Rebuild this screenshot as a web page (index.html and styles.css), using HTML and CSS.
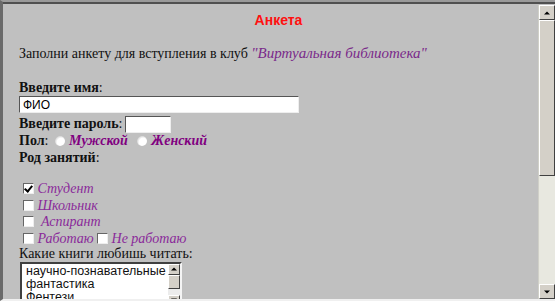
FILE: index.html
```html
<!DOCTYPE html>
<html lang="ru">
<head>
    <meta charset="UTF-8">
    <title>Анкета</title>
    <link rel="stylesheet" href="styles.css">
</head>
<body>
    <div class="window">
        <div class="page">
            <h3 class="title">Анкета</h3>
            <p class="intro">Заполни анкету для вступления в клуб <span class="club">"Виртуальная библиотека"</span></p>

            <div class="row"><b>Введите имя</b>:</div>
            <input class="name" type="text" value="ФИО">
            <div class="row"><b>Введите пароль</b>: <input class="pass" type="password"></div>
            <div class="row"><b>Пол</b>: <span class="radio"></span><i class="opt">Мужской</i> <span class="radio"></span><i class="opt">Женский</i></div>
            <div class="row"><b>Род занятий</b>:</div>

            <div class="checks">
                <div class="row"><span class="check on"></span> <i class="job">Студент</i></div>
                <div class="row"><span class="check"></span> <i class="job">Школьник</i></div>
                <div class="row"><span class="check"></span> &nbsp;<i class="job">Аспирант</i></div>
                <div class="row"><span class="check"></span> <i class="job">Работаю</i> <span class="check"></span> <i class="job">Не работаю</i></div>
            </div>
            <div class="row books">Какие книги любишь читать:</div>
            <div class="listbox">
                <div class="items">
                    <div>научно-познавательные</div>
                    <div>фантастика</div>
                    <div>Фентези</div>
                </div>
                <div class="minibar">
                    <span class="btn up"></span>
                    <span class="mthumb"></span>
                    <span class="mtrack"></span>
                    <span class="btn down"></span>
                </div>
            </div>
        </div>
        <div class="scrollbar">
            <span class="sbtn up"></span>
            <span class="thumb"></span>
            <span class="track"></span>
            <span class="sbtn down"></span>
        </div>
    </div>
</body>
</html>
```
FILE: styles.css
```css
body {
    margin: 0;
    overflow: hidden;
    background: #e4e4e0;
}
.window {
    display: flex;
    height: 297px;
    width: 552px;
    border-top: 2px solid #9a9a9a;
    border-left: 3px solid #6a6a6a;
    border-bottom: 2px solid #f0f0f0;
    background: #c0c0c0;
    box-shadow: inset 0 2px 0 #505050;
}
.page {
    flex: 1;
    padding: 0 0 0 16px;
    font-family: 'Liberation Serif', serif;
    font-size: 14px;
    color: #111;
    overflow: hidden;
}
.title {
    margin: 10px 0 0;
    text-align: center;
    font-family: 'Liberation Sans', Arial, sans-serif;
    font-size: 14px;
    color: #ff1010;
}
.intro {
    margin: 16px 0 0;
    line-height: 18px;
}
.club {
    font-style: italic;
    font-size: 15px;
    color: #7a2a8a;
}
.row {
    line-height: 17px;
    height: 17px;
}
.intro + .row {
    margin-top: 16px;
}
.name {
    display: block;
    box-sizing: border-box;
    width: 280px;
    height: 17px;
    margin: 0 0 2px;
    padding: 0 3px;
    font-family: 'Liberation Sans', Arial, sans-serif;
    font-size: 12px;
    border: 1px solid;
    border-color: #555 #eee #eee #555;
    background: #fff;
}
.pass {
    box-sizing: border-box;
    width: 46px;
    height: 17px;
    vertical-align: middle;
    border: 1px solid;
    border-color: #555 #eee #eee #555;
    background: #fff;
    margin: 0 0 0 -1px;
}
.radio {
    display: inline-block;
    width: 10px;
    height: 10px;
    margin: 0 4px 0 3px;
    border-radius: 50%;
    background: radial-gradient(circle at 60% 60%, #fff 45%, #d8d8d8 70%, #8a8a8a 100%);
    vertical-align: -1px;
}
.opt {
    font-weight: bold;
    color: #800080;
    margin-right: 3px;
}
.checks {
    margin-top: 14px;
    padding-left: 4px;
}
.checks .row {
    height: 16.7px;
}
.check {
    display: inline-block;
    box-sizing: border-box;
    width: 11px;
    height: 11px;
    background: #fff;
    border: 1px solid;
    border-color: #666 #eee #eee #666;
    vertical-align: -1px;
    position: relative;
}
.check.on::after {
    content: '';
    position: absolute;
    left: 2px;
    top: 0;
    width: 3px;
    height: 6px;
    border: solid #000;
    border-width: 0 2px 2px 0;
    transform: rotate(40deg);
}
.job {
    color: #8a2a9a;
    font-size: 14px;
}
.books {
    margin-top: -2px;
}
.listbox {
    display: flex;
    width: 162px;
    height: 46px;
    margin: 0 0 0 1px;
    box-sizing: border-box;
    border: 2px solid;
    border-color: #404040 #f4f4f4 #f4f4f4 #404040;
    background: #fff;
}
.items {
    flex: 1;
    padding: 1px 0 0 4px;
    font-family: 'Liberation Sans', Arial, sans-serif;
    font-size: 12.5px;
    line-height: 13px;
    overflow: hidden;
}
.minibar {
    display: flex;
    flex-direction: column;
    width: 12px;
    background: #ececec;
}
.btn, .sbtn {
    display: block;
    box-sizing: border-box;
    background: #d4d0c8;
    border: 1px solid;
    border-color: #fff #404040 #404040 #fff;
    position: relative;
}
.btn { height: 11px; }
.btn::after, .sbtn::after {
    content: '';
    position: absolute;
    left: 50%;
    top: 50%;
    border-left: 3px solid transparent;
    border-right: 3px solid transparent;
    transform: translate(-50%, -50%);
}
.up::after { border-bottom: 3px solid #000; }
.down::after { border-top: 3px solid #000; }
.mthumb {
    display: block;
    height: 12px;
    background: #d4d0c8;
    border: 1px solid;
    border-color: #fff #404040 #404040 #fff;
}
.mtrack { flex: 1; }
.scrollbar {
    display: flex;
    flex-direction: column;
    width: 16px;
    margin-top: 3px;
    background: #e8e8e0;
    border-left: 1px solid #d0d0c8;
}
.sbtn { height: 15px; }
.thumb {
    display: block;
    height: 154px;
    background: #d4d0c8;
    border: 1px solid;
    border-color: #fff #404040 #404040 #fff;
}
.track { flex: 1; }
```
